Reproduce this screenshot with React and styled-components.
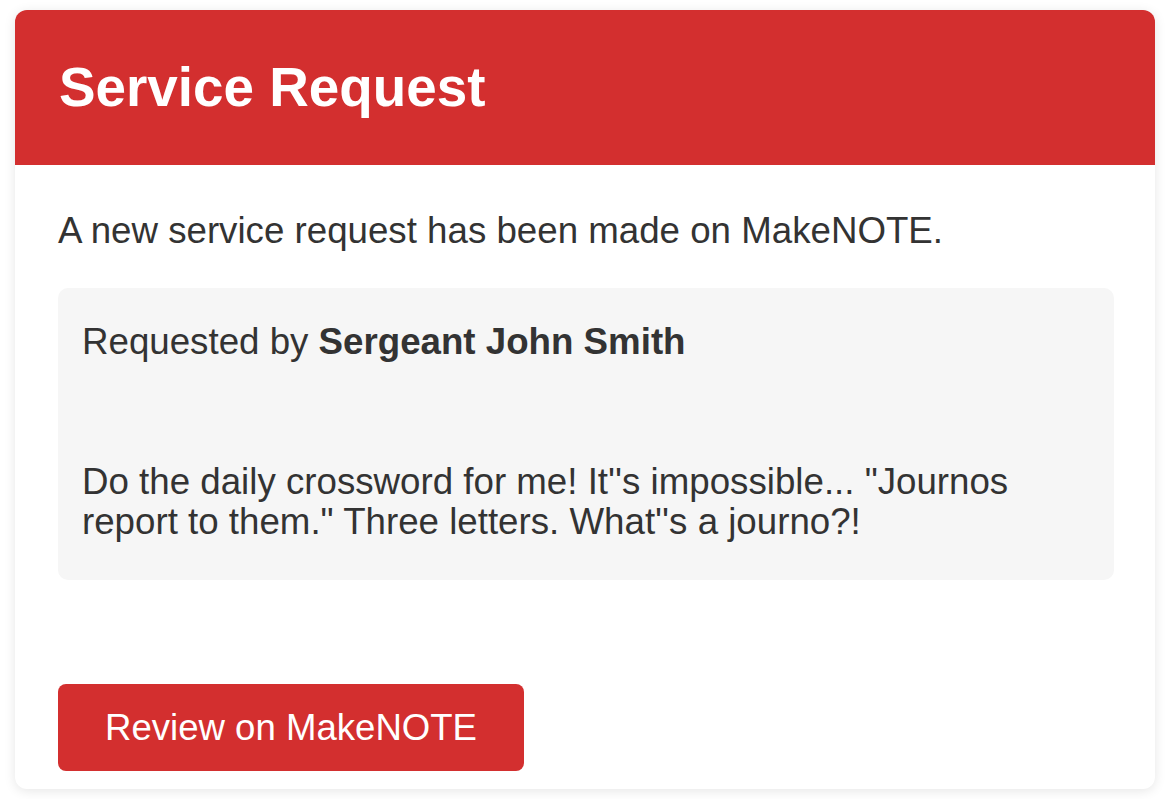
import React from "react";
import styled, { createGlobalStyle } from "styled-components";

const GlobalStyle = createGlobalStyle`
  html, body {
    margin: 0;
    padding: 0;
    background: #ffffff;
  }
  body {
    font-family: "Liberation Sans", Arial, sans-serif;
    color: #333333;
  }
`;

const Page = styled.div`
  padding: 10px 15px;
`;

const Card = styled.div`
  width: 1140px;
  background: #ffffff;
  border-radius: 12px;
  overflow: hidden;
  box-shadow: 0 2px 12px rgba(0, 0, 0, 0.1);
`;

const Header = styled.header`
  height: 155px;
  padding: 0 44px;
  display: flex;
  align-items: center;
  background: #d32f2f;
`;

const Title = styled.h1`
  margin: 0;
  font-size: 54.8px;
  line-height: 1;
  font-weight: 700;
  color: #ffffff;
`;

const Body = styled.div`
  padding: 46px 41px 18px 43px;
`;

const Text = styled.p`
  margin: 0;
  font-size: 36.7px;
  line-height: 40px;
  margin-top: ${(p) => p.$gap || 0}px;
`;

const Details = styled.div`
  margin-top: 37px;
  padding: 34px 24px 38px;
  background: #f6f6f6;
  border-radius: 10px;
`;

const Button = styled.a`
  display: inline-block;
  margin-top: 104px;
  padding: 23.5px 47px;
  font-size: 36.6px;
  line-height: 40px;
  color: #ffffff;
  background: #d32f2f;
  border-radius: 8px;
  text-decoration: none;
`;

const App = () => {
  return (
    <Page>
      <GlobalStyle />
      <Card>
        <Header>
          <Title>Service Request</Title>
        </Header>
        <Body>
          <Text>A new service request has been made on MakeNOTE.</Text>
          <Details>
            <Text>
              Requested by <strong>Sergeant John Smith</strong>
            </Text>
            <Text $gap={100}>
              Do the daily crossword for me! It''s impossible... "Journos
              report to them." Three letters. What''s a journo?!
            </Text>
          </Details>
          <Button href="#">Review on MakeNOTE</Button>
        </Body>
      </Card>
    </Page>
  );
};

export default App;
